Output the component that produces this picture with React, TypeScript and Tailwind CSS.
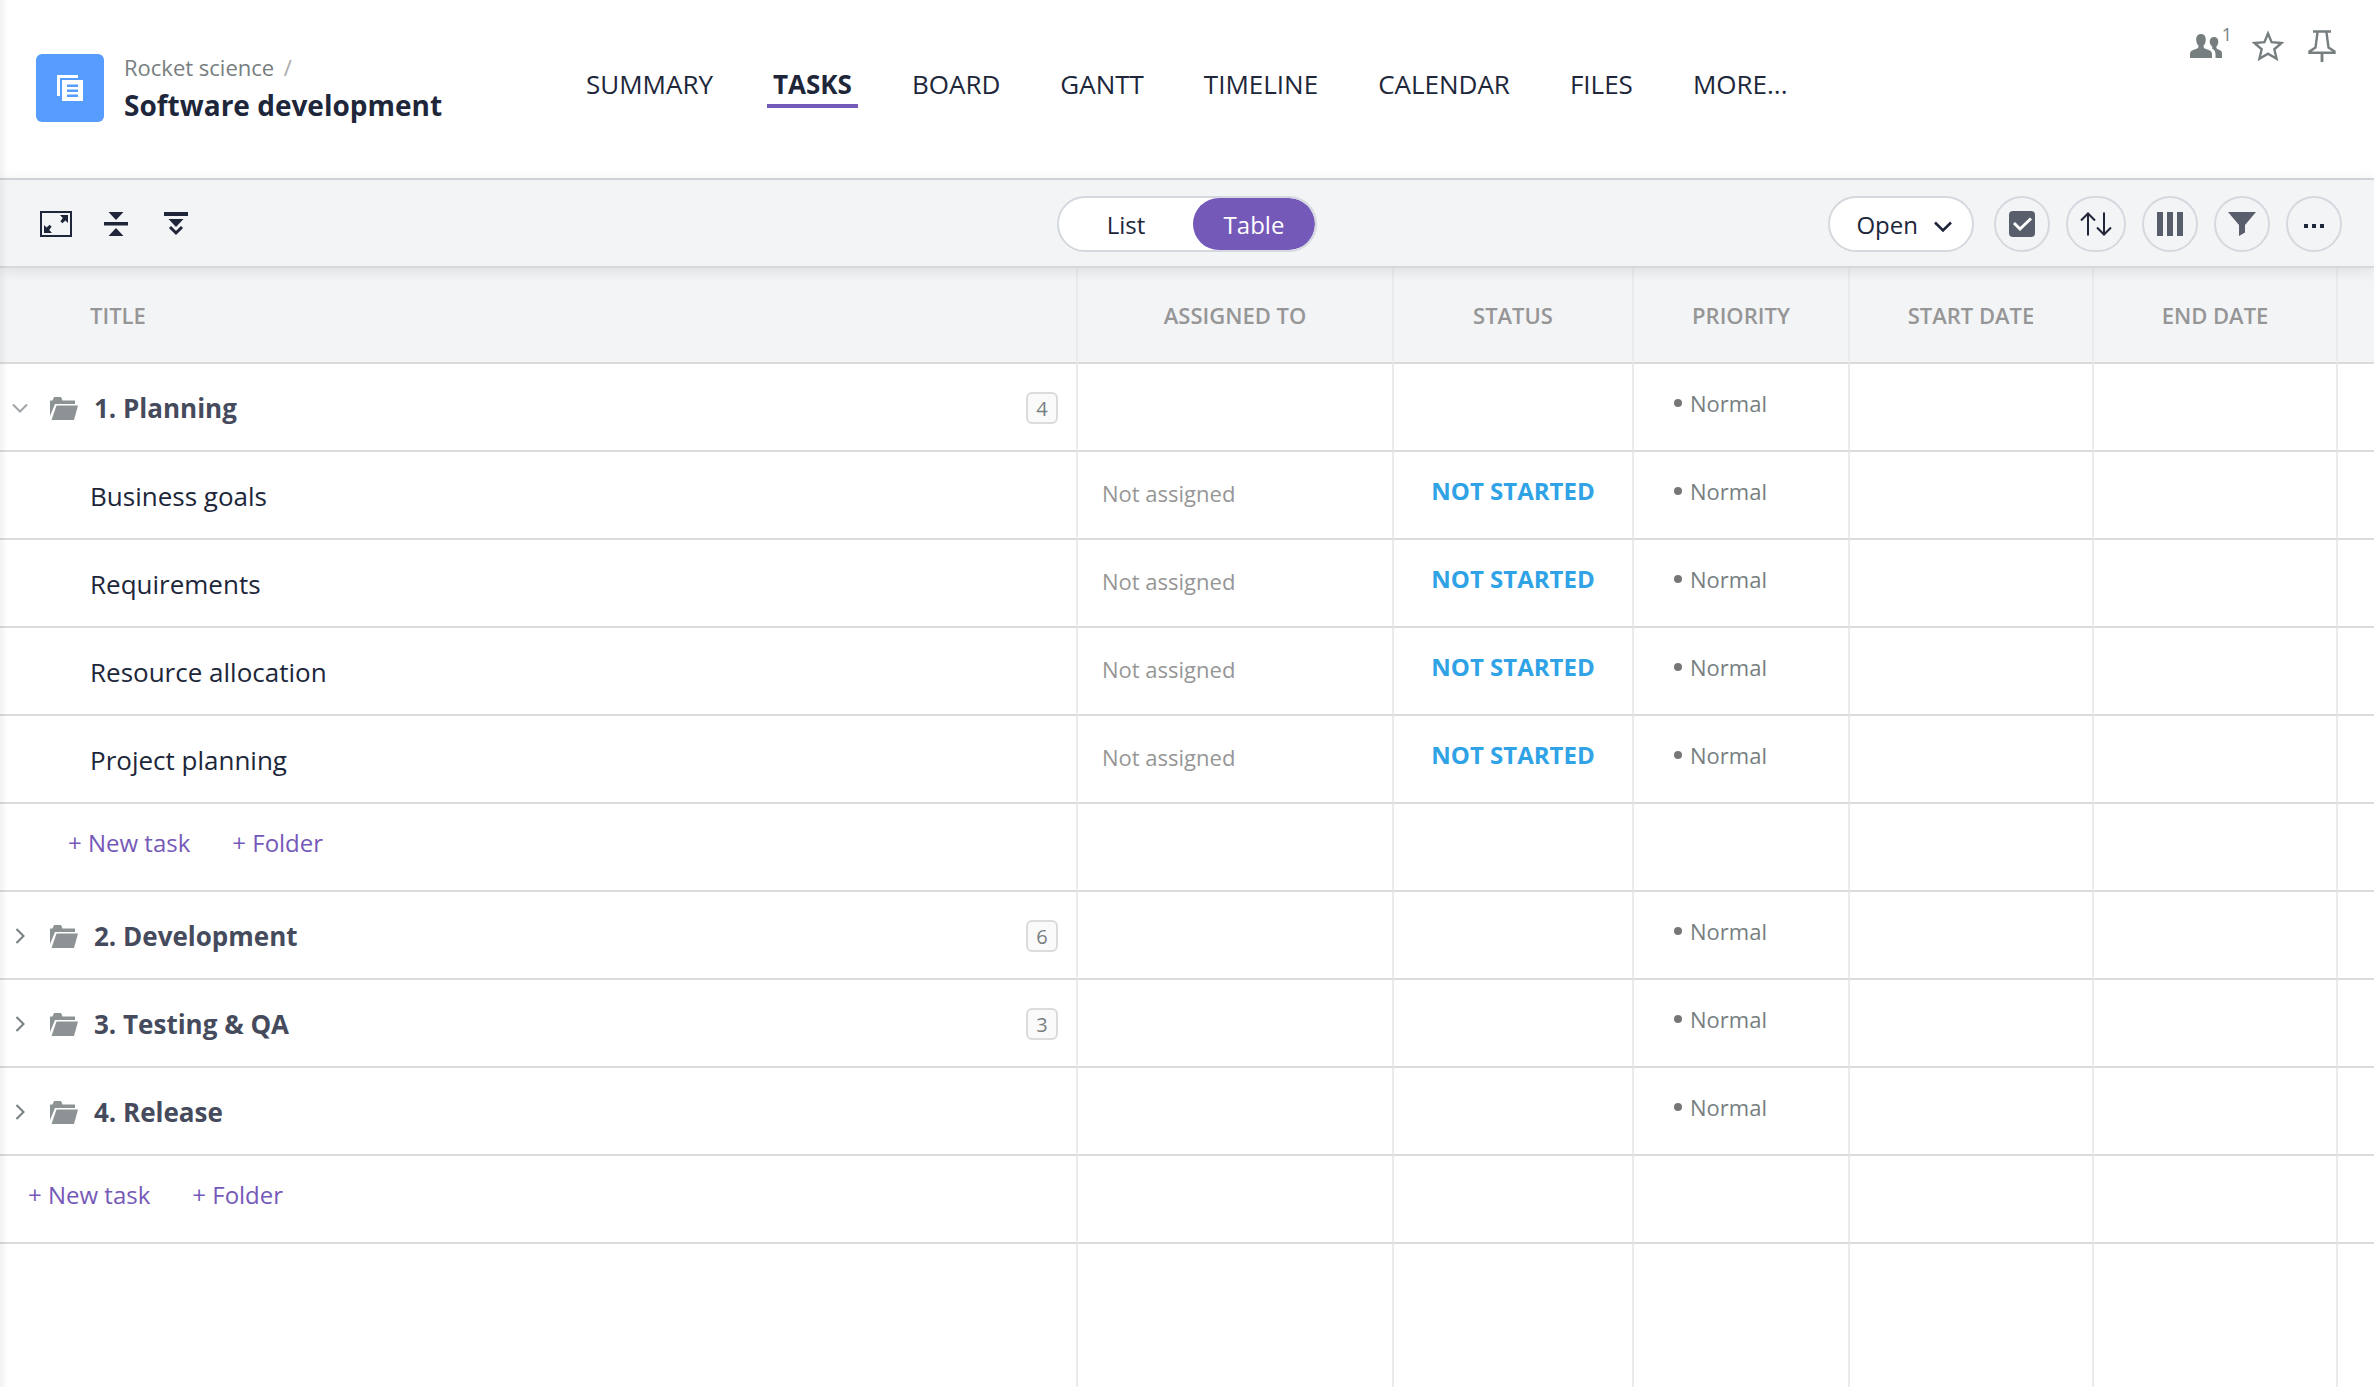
import type { ReactNode } from "react";

const tabs = ["SUMMARY", "TASKS", "BOARD", "GANTT", "TIMELINE", "CALENDAR", "FILES", "MORE..."];

const columns = [
  { label: "ASSIGNED TO", width: "w-[316px]" },
  { label: "STATUS", width: "w-[240px]" },
  { label: "PRIORITY", width: "w-[216px]" },
  { label: "START DATE", width: "w-[244px]" },
  { label: "END DATE", width: "w-[244px]" },
];

type Row =
  | { type: "folder"; title: string; count?: number; open?: boolean }
  | { type: "task"; title: string }
  | { type: "add"; nested?: boolean };

const rows: Row[] = [
  { type: "folder", title: "1. Planning", count: 4, open: true },
  { type: "task", title: "Business goals" },
  { type: "task", title: "Requirements" },
  { type: "task", title: "Resource allocation" },
  { type: "task", title: "Project planning" },
  { type: "add", nested: true },
  { type: "folder", title: "2. Development", count: 6 },
  { type: "folder", title: "3. Testing & QA", count: 3 },
  { type: "folder", title: "4. Release" },
  { type: "add" },
];

const cell = "border-r-2 border-b-2 border-r-[#ebebeb] border-b-[#dbdbdb] p-0";

const ProjectIcon = () => (
  <svg width="26" height="26" viewBox="0 0 26 26" fill="#fff">
    <path d="M0 0h21v3H3v18H0z" />
    <path fillRule="evenodd" d="M5 5h21v21H5zM10 9.500v2.400h11v-2.400zM10 14.500v2.400h11v-2.400zM10 19.500v2.400h11v-2.400z" />
  </svg>
);

const FullscreenIcon = () => (
  <svg width="32" height="26" viewBox="0 0 32 26" fill="#20263a">
    <path fillRule="evenodd" d="M0 0h32v26H0zM2 2v22h28V2z" />
    <path d="M20 4h8v8l-2.600-2.400-3 2.600-2-2 2.400-3.200z" />
    <path d="M12 22H4v-8l2.600 2.400 3-2.600 2 2-2.400 3.200z" />
  </svg>
);

const CollapseIcon = () => (
  <svg width="24" height="24" viewBox="0 0 24 24" fill="#20263a">
    <path d="M4.500 0h15L12 8zM0 10h24v3.500H0zM4.500 24h15L12 16z" />
  </svg>
);

const ExpandIcon = () => (
  <svg width="24" height="24" viewBox="0 0 24 24" fill="#20263a">
    <path d="M0 0h24v4H0zM4.500 7h15L12 15z" />
    <path d="M6 15l6 6 6-6" fill="none" stroke="#20263a" strokeWidth="3" />
  </svg>
);

const FolderIcon = () => (
  <svg width="28" height="24" viewBox="0 0 28 24" fill="#8d9394">
    <path d="M0 20V4.500h2.500L4 1h7l1.500 3.500H25V8H5z" />
    <path d="M6.500 9.500H28L24 24H1.500z" />
  </svg>
);

const ChevronIcon = ({ open }: { open?: boolean }) => (
  <svg width="16" height="16" viewBox="0 0 16 16" fill="none" stroke={open ? "#a0a4a6" : "#777e80"} strokeWidth="2">
    {open ? <path d="M1 4.500l7 7 7-7" /> : <path d="M4.500 1l7 7-7 7" />}
  </svg>
);

const PeopleIcon = () => (
  <svg width="32" height="24" viewBox="0 0 32 24" fill="#777e80">
    <path d="M11 0c3 0 4.800 2.200 4.800 5.500 0 3-1 5-2.300 6.300 0 2 .7 2.700 2.500 3.200 4.500 1.200 6 2.300 6 5.500V24H0v-3.500c0-3.200 1.500-4.300 6-5.500 1.800-.5 2.500-1.200 2.500-3.200C7.200 10.500 6.200 8.500 6.200 5.500 6.200 2.200 8 0 11 0z" />
    <path d="M24 3c2.700 0 4.300 1.900 4.300 4.600 0 2.600-.9 4.100-2 5.100 0 1.700.7 2.300 2.200 2.800 2.500.8 3.500 1.700 3.500 4.500v4h-6.500v-3.500c0-3-1.200-4.800-3.500-6 .3-.5.300-1 .3-1.800-1.600-1.300-2.600-2.700-2.600-5.100C19.700 4.900 21.300 3 24 3z" />
  </svg>
);

const StarIcon = () => (
  <svg width="32" height="32" viewBox="0 0 32 32" fill="none" stroke="#777e80" strokeWidth="2.400">
    <path d="M16 3.500l3.600 8.700 10 .8-7.300 6.300 2.300 9.500L16 23.700l-8.600 5.100 2.300-9.500L2.400 13l10-.8z" />
  </svg>
);

const PinIcon = () => (
  <svg width="28" height="32" viewBox="0 0 28 32" fill="none" stroke="#777e80" strokeWidth="2.400">
    <path d="M5 1.500h18M9.500 2.500L7.500 17.500 1.500 21.500v1.300h25v-1.300l-6-4-2-15" />
    <path d="M14 23v9" strokeWidth="2.800" />
  </svg>
);

const RoundButton = ({ label, width = "w-14", children }: { label: string; width?: string; children: ReactNode }) => (
  <button
    aria-label={label}
    className={`${width} flex h-14 items-center justify-center rounded-full border-2 border-[#d5d8de]`}
  >
    {children}
  </button>
);

const Header = () => (
  <header className="flex items-start border-b-2 border-[#d5d8de] pr-[38px] pl-9">
    <div className="flex h-[178px] w-[544px] shrink-0 gap-5 pt-[54px]">
      <div className="flex size-[68px] items-center justify-center rounded-md bg-[#579dff]">
        <ProjectIcon />
      </div>
      <div>
        <a href="#" className="block text-[22px] leading-[26px] text-[#777e80]">
          Rocket science <span className="ml-1 text-[#aaaaaa]">/</span>
        </a>
        <h1 className="text-[28px] leading-[50px] font-bold">Software development</h1>
      </div>
    </div>
    <nav className="flex flex-1 gap-12 pt-16">
      {tabs.map((tab) => (
        <a
          key={tab}
          href="#"
          className={`border-b-4 px-[6px] text-[26px] leading-10 ${
            tab === "TASKS" ? "border-[#7559b8] font-bold" : "border-transparent"
          }`}
        >
          {tab}
        </a>
      ))}
    </nav>
    <div className="flex items-start gap-5 pt-7">
      <button aria-label="Members" className="flex items-start text-[#777e80]">
        <span className="pt-[6px]">
          <PeopleIcon />
        </span>
        <span className="text-[18px] leading-3">1</span>
      </button>
      <div className="flex items-end gap-6">
        <button aria-label="Add to favorites">
          <StarIcon />
        </button>
        <button aria-label="Pin" className="pt-[2px]">
          <PinIcon />
        </button>
      </div>
    </div>
  </header>
);

const Toolbar = () => (
  <div className="relative grid grid-cols-[1fr_auto_1fr] items-center border-b-2 border-[#d5d8de] bg-[#f3f4f6] px-8 pt-4 pb-[14px] shadow-[0_2px_14px_rgba(0,0,0,0.10)]">
    <div className="flex items-center gap-9 pl-2">
      <button aria-label="Full screen" className="-mr-1">
        <FullscreenIcon />
      </button>
      <button aria-label="Collapse all">
        <CollapseIcon />
      </button>
      <button aria-label="Expand all">
        <ExpandIcon />
      </button>
    </div>
    <div className="flex h-14 overflow-hidden rounded-full border-2 border-[#d5d8de] bg-white text-[24px]">
      <button className="w-[134px] pt-[2px]">List</button>
      <button className="w-[122px] rounded-full bg-[#7559b8] pt-[2px] text-white">Table</button>
    </div>
    <div className="flex items-center justify-end gap-4">
      <button className="mr-1 flex h-14 w-[146px] items-center justify-end gap-4 rounded-full border-2 border-[#d5d8de] bg-white pt-[2px] pr-5 text-[24px]">
        Open
        <svg className="mt-1" width="18" height="12" viewBox="0 0 18 12" fill="none" stroke="#20263a" strokeWidth="2.600">
          <path d="M1 1.500l8 8 8-8" />
        </svg>
      </button>
      <RoundButton label="Select tasks">
        <svg width="26" height="26" viewBox="0 0 26 26">
          <rect width="26" height="26" rx="4" fill="#585e6b" />
          <path d="M5 12l6 6L22 7.500" fill="none" stroke="#fff" strokeWidth="3" />
        </svg>
      </RoundButton>
      <RoundButton label="Sort" width="w-15">
        <svg width="32" height="24" viewBox="0 0 32 24" fill="none" stroke="#20263a" strokeWidth="2">
          <path d="M8 23.500V2M1 8.500l7-7 7 7M24 .5V22M17 15.500l7 7 7-7" />
        </svg>
      </RoundButton>
      <RoundButton label="Columns">
        <svg width="26" height="24" viewBox="0 0 26 24" fill="#585e6b">
          <path d="M0 0h6v24H0zM10 0h6v24h-6zM20 0h6v24h-6z" />
        </svg>
      </RoundButton>
      <RoundButton label="Filter">
        <svg width="28" height="24" viewBox="0 0 28 24" fill="#585e6b">
          <path d="M0 0h28L17 13v7.500L11 24V13z" />
        </svg>
      </RoundButton>
      <RoundButton label="More actions">
        <svg className="mt-1" width="20" height="4" viewBox="0 0 20 4" fill="#20263a">
          <path d="M0 0h4v4H0zM8 0h4v4H8zM16 0h4v4h-4z" />
        </svg>
      </RoundButton>
    </div>
  </div>
);

const TitleCell = ({ row }: { row: Row }) => {
  if (row.type === "folder") {
    return (
      <div className="flex items-center pt-[2px] pr-[18px] pl-3">
        <button aria-label={row.open ? "Collapse" : "Expand"} className="mr-[22px]">
          <ChevronIcon open={row.open} />
        </button>
        <FolderIcon />
        <span className="ml-4 flex-1 text-[26px] font-bold text-[#454b5c]">{row.title}</span>
        {row.count && (
          <span className="flex size-8 items-center justify-center rounded-md border-2 border-[#dbdbdb] bg-[#fafafa] pt-[2px] text-[20px] text-[#777e80]">
            {row.count}
          </span>
        )}
      </div>
    );
  }
  if (row.type === "task") {
    return <div className="pt-[2px] pl-[90px] text-[26px]">{row.title}</div>;
  }
  return (
    <div className={`flex gap-[42px] pb-2 text-[24px] text-[#7559b8] ${row.nested ? "pl-[68px]" : "pl-7"}`}>
      <button>+ New task</button>
      <button>+ Folder</button>
    </div>
  );
};

const TaskTable = () => (
  <table className="w-full table-fixed border-separate border-spacing-0 text-[22px]">
    <thead>
      <tr className="h-24 bg-[#f3f4f6] text-[#969696]">
        <th className={`${cell} pl-[90px] text-left font-semibold`}>TITLE</th>
        {columns.map((col) => (
          <th key={col.label} className={`${cell} ${col.width} font-semibold`}>
            {col.label}
          </th>
        ))}
        <td className="w-9 border-b-2 border-[#dbdbdb] p-0" />
      </tr>
    </thead>
    <tbody>
      {rows.map((row, i) => (
        <tr key={i} className="h-[88px]">
          <td className={cell}>
            <TitleCell row={row} />
          </td>
          <td className={cell}>
            {row.type === "task" && <div className="pb-1 pl-6 text-[#969696]">Not assigned</div>}
          </td>
          <td className={cell}>
            {row.type === "task" && (
              <div className="pb-2 text-center text-[24px] font-bold text-[#2fa3e6]">NOT STARTED</div>
            )}
          </td>
          <td className={cell}>
            {row.type !== "add" && (
              <div className="flex items-center gap-2 pb-2 pl-10 text-[#777e80]">
                <span className="size-2 rounded-full bg-[#777]" />
                Normal
              </div>
            )}
          </td>
          <td className={cell} />
          <td className={cell} />
          <td className="border-b-2 border-[#dbdbdb] p-0" />
        </tr>
      ))}
      {/* Column lines run on below the last row */}
      <tr aria-hidden="true">
        {[0, 1, 2, 3, 4, 5].map((n) => (
          <td key={n} className="border-r-2 border-[#ebebeb] p-0" />
        ))}
        <td className="p-0" />
      </tr>
    </tbody>
  </table>
);

export default function App() {
  return (
    <div className="relative flex min-h-screen flex-col bg-white font-['Open_Sans',sans-serif] text-[#20263a]">
      <Header />
      <Toolbar />
      <main className="flex flex-1">
        <TaskTable />
      </main>
      <div className="pointer-events-none absolute inset-y-0 left-0 w-2 bg-linear-to-r from-black/5 to-transparent" />
    </div>
  );
}
